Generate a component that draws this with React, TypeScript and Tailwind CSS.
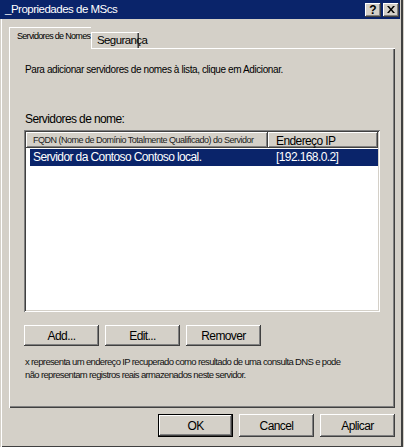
const raised =
  "bg-[#d4d0c8] shadow-[inset_-1px_-1px_#404040,inset_1px_1px_#ffffff,inset_-2px_-2px_#808080,inset_2px_2px_#d4d0c8]";

function Btn({ label, isDefault }: { label: string; isDefault?: boolean }) {
  if (isDefault) {
    return (
      <div className="w-[75px] h-[23px] border border-black">
        <div className={`${raised} w-full h-full flex items-center justify-center text-[12px] tracking-[-0.6px] text-black`}>
          {label}
        </div>
      </div>
    );
  }
  return (
    <div className={`${raised} w-[75px] h-[23px] flex items-center justify-center text-[12px] tracking-[-0.6px] text-black`}>
      {label}
    </div>
  );
}

export default function App() {
  return (
    <div className="w-[404px] h-[447px] bg-[#d4d0c8] flex flex-col font-['Liberation_Sans',Arial,sans-serif] shadow-[inset_1px_0_#d4d0c8,inset_2px_0_#ffffff,inset_-1px_0_#d4d0c8,inset_-3px_0_#404040,inset_0_-1px_#404040]">
      {/* Title bar */}
      <div className="w-[400px] h-[19px] bg-[#0a246a] flex items-center pl-[5px] pr-[1px]">
        <span className="text-white text-[11.5px] tracking-[-0.5px] leading-none">_Propriedades de MScs</span>
        <div className="ml-auto flex gap-[2px]">
          <div className={`${raised} w-[16px] h-[14px] flex items-center justify-center text-[12px] font-bold leading-none text-black`}>
            ?
          </div>
          <div className={`${raised} w-[16px] h-[14px] flex items-center justify-center`}>
            <svg width="8" height="7" viewBox="0 0 8 7">
              <path d="M0 0h2l2 2.5L6 0h2L5 3.5 8 7H6L4 4.5 2 7H0l3-3.5z" fill="#000" />
            </svg>
          </div>
        </div>
      </div>

      {/* Tabs */}
      <div className="mt-[8px] ml-[9px] flex items-end h-[21px]">
        <div className="relative z-10 w-[82px] h-[22px] mb-[-1px] bg-[#d4d0c8] shadow-[inset_1px_1px_#ffffff] pl-[8px] pt-[4px] text-[9px] tracking-[-0.7px] leading-[11px] text-black whitespace-nowrap">
          Servidores de Nomes
        </div>
        <div className="relative z-20 w-[48px] h-[16px] bg-[#d4d0c8] shadow-[inset_1px_1px_#ffffff,inset_-1px_0_#404040,inset_-2px_0_#808080] pl-[6px] pt-[1px] text-[11.5px] tracking-[-0.6px] leading-[14px] text-black whitespace-nowrap">
          Segurança
        </div>
      </div>

      {/* Panel */}
      <div className="ml-[9px] w-[386px] h-[360px] shadow-[inset_1px_1px_#ffffff,inset_-1px_-1px_#404040,inset_-2px_-2px_#808080] pl-[16px] pt-[16px] flex flex-col text-black">
        <p className="text-[10px] tracking-[-0.4px] leading-[12px]">
          Para adicionar servidores de nomes à lista, clique em Adicionar.
        </p>
        <p className="mt-[36px] text-[12px] tracking-[-0.6px] leading-[14px]">Servidores de nome:</p>

        {/* List */}
        <div className="mt-[4px] -ml-[1px] w-[356px] h-[182px] bg-white shadow-[inset_1px_1px_#808080,inset_-1px_-1px_#ffffff,inset_2px_2px_#404040,inset_-2px_-2px_#d4d0c8] p-[2px] flex flex-col">
          <div className="flex h-[16px]">
            <div className={`${raised} w-[242px] pl-[7px] text-[9px] tracking-[-0.5px] leading-[16px] whitespace-nowrap overflow-hidden text-[#222]`}>
              FQDN (Nome de Domínio Totalmente Qualificado) do Servidor
            </div>
            <div className={`${raised} w-[110px] pl-[8px] pt-[2px] text-[12px] tracking-[-0.6px] leading-[15px] whitespace-nowrap`}>
              Endereço IP
            </div>
          </div>
          <div className="ml-[4px] mt-[1px] h-[17px] bg-[#0a246a] flex text-white text-[12px] tracking-[-0.6px] leading-[17px]">
            <div className="w-[238px] pl-[3px] whitespace-nowrap">Servidor da Contoso Contoso local.</div>
            <div className="pl-[8px] whitespace-nowrap">[192.168.0.2]</div>
          </div>
        </div>

        {/* Buttons */}
        <div className="mt-[13px] -ml-[1px] flex gap-[6px] text-[12px] tracking-[-0.6px]">
          <div className={`${raised} w-[75px] h-[21px] flex items-center justify-center`}>Add...</div>
          <div className={`${raised} w-[75px] h-[21px] flex items-center justify-center`}>Edit...</div>
          <div className={`${raised} w-[75px] h-[21px] flex items-center justify-center`}>Remover</div>
        </div>

        <p className="mt-[9px] text-[9.5px] tracking-[-0.65px] leading-[13px] text-[#111] whitespace-nowrap">
          x representa um endereço IP recuperado como resultado de uma consulta DNS e pode
          <br />
          não representam registros reais armazenados neste servidor.
        </p>
      </div>

      {/* Dialog buttons */}
      <div className="mt-[6px] ml-[158px] flex gap-[6px]">
        <Btn label="OK" isDefault />
        <Btn label="Cancel" />
        <Btn label="Aplicar" />
      </div>
    </div>
  );
}
